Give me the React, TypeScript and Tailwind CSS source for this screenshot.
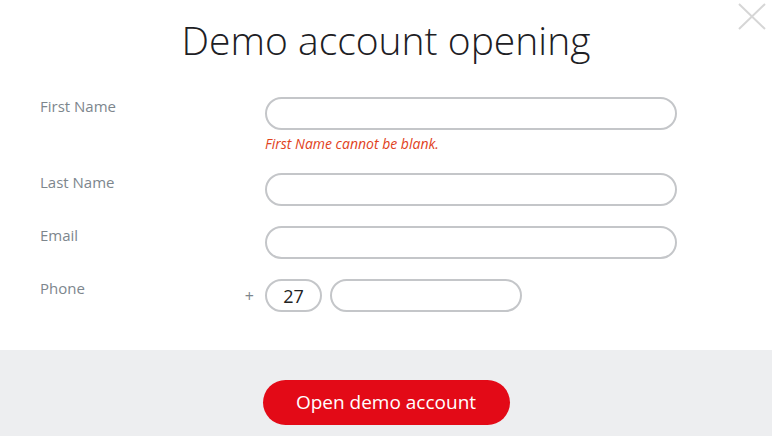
import React from "react";

const font = { fontFamily: '"Open Sans", "Noto Sans", sans-serif' };

function Field({ label, children }: { label: string; children: React.ReactNode }) {
  return (
    <div className="grid grid-cols-[200px_1fr]">
      <label className="-mt-[1px] text-[15px] leading-[20px] text-[#7d868d]">{label}</label>
      <div>{children}</div>
    </div>
  );
}

const inputCls =
  "h-[33px] rounded-full border-2 border-[#c4c6c9] bg-white px-4 text-[18px] text-[#222] outline-none";

export default function App() {
  return (
    <div className="flex h-[436px] w-full flex-col bg-white" style={font}>
      <div className="relative h-[350px] shrink-0">
        <button type="button" className="absolute right-[6px] top-[3px] h-[27px] w-[28px]">
          <svg viewBox="0 0 28 27" className="h-[27px] w-[28px]" fill="none" stroke="#d6d6d6" strokeWidth="2">
            <path d="M1 1 L27 26 M27 1 L1 26" />
          </svg>
        </button>

        <h1 className="pt-[14px] text-center text-[39px] font-light leading-[52px] text-[#1d2024]">
          Demo account opening
        </h1>

        <form className="mt-[31px] flex flex-col gap-[20px] pl-[40px]">
          <Field label="First Name">
            <input className={`${inputCls} ml-[25px] w-[412px]`} />
            <p className="ml-[25px] mt-[5px] text-[14px] italic leading-[18px] text-[#e1421c]">
              First Name cannot be blank.
            </p>
          </Field>
          <Field label="Last Name">
            <input className={`${inputCls} ml-[25px] w-[412px]`} />
          </Field>
          <Field label="Email">
            <input className={`${inputCls} ml-[25px] w-[412px]`} />
          </Field>
          <Field label="Phone">
            <div className="flex items-center">
              <span className="w-[25px] pr-[11px] text-right text-[16px] text-[#7d868d]">+</span>
              <input defaultValue="27" className={`${inputCls} w-[57px] px-0 text-center`} />
              <input className={`${inputCls} ml-[8px] w-[192px]`} />
            </div>
          </Field>
        </form>
      </div>

      <div className="flex flex-1 justify-center bg-[#edeef0]">
        <button
          type="button"
          className="mt-[30px] h-[45px] w-[247px] rounded-full bg-[#e30a17] text-[19px] font-medium text-white"
        >
          Open demo account
        </button>
      </div>
    </div>
  );
}
